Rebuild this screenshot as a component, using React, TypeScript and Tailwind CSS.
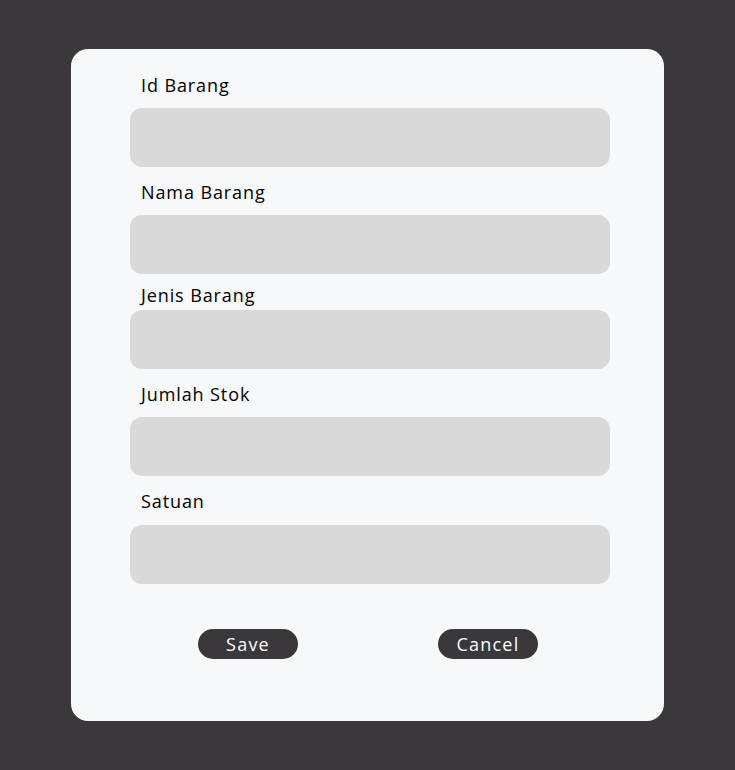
import React from 'react';

const fields = [
  { label: 'Id Barang', top: 'mt-[24px]', gap: 'mb-[11px]' },
  { label: 'Nama Barang', top: 'mt-[13px]', gap: 'mb-[11px]' },
  { label: 'Jenis Barang', top: 'mt-[9px]', gap: 'mb-[3px]' },
  { label: 'Jumlah Stok', top: 'mt-[13px]', gap: 'mb-[11px]' },
  { label: 'Satuan', top: 'mt-[13px]', gap: 'mb-[12px]' },
];

const App: React.FC = () => {
  return (
    <div
      className="min-h-screen w-full bg-[#3a373d] pt-[49px] pl-[71px]"
      style={{ fontFamily: '"Open Sans", "Liberation Sans", sans-serif' }}
    >
      <div className="w-[593px] h-[672px] bg-[#f7f8fa] rounded-[17px] pl-[59px] pr-[54px]">
        <form className="flex flex-col" onSubmit={(e) => e.preventDefault()}>
          {fields.map((f) => (
            <div key={f.label} className={f.top}>
              <label className={`block pl-[11px] text-[18px] leading-[24px] tracking-[0.9px] text-black ${f.gap}`}>
                {f.label}
              </label>
              <input
                type="text"
                className="block w-full h-[59px] rounded-[12px] bg-[#d9d9d9] outline-none px-4"
              />
            </div>
          ))}

          {/* Actions */}
          <div className="flex justify-between mt-[45px] pl-[68px] pr-[72px]">
            <button
              type="submit"
              className="w-[100px] h-[30px] rounded-full bg-[#3a373d] text-white text-[18px] leading-[30px] tracking-[1.2px]"
            >
              Save
            </button>
            <button
              type="button"
              className="w-[100px] h-[30px] rounded-full bg-[#3a373d] text-white text-[18px] leading-[30px] tracking-[1.2px]"
            >
              Cancel
            </button>
          </div>
        </form>
      </div>
    </div>
  );
};

export default App;
